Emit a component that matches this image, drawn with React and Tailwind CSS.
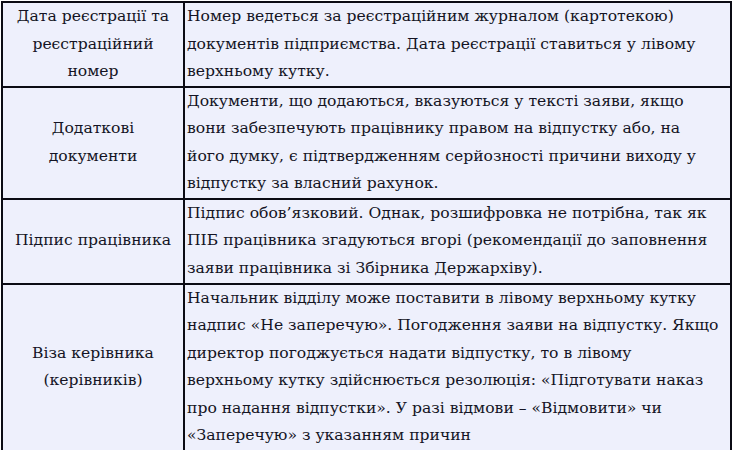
export default function App() {
  const rows = [
    {
      label: ['Дата реєстрації та', 'реєстраційний', 'номер'],
      text: [
        'Номер ведеться за реєстраційним журналом (картотекою)',
        'документів підприємства. Дата реєстрації ставиться у лівому',
        'верхньому кутку.',
      ],
      h: 'h-[84px]',
    },
    {
      label: ['Додаткові', 'документи'],
      text: [
        'Документи, що додаються, вказуються у тексті заяви, якщо',
        'вони забезпечують працівнику правом на відпустку або, на',
        'його думку, є підтвердженням серйозності причини виходу у',
        'відпустку за власний рахунок.',
      ],
      h: 'h-[111px]',
    },
    {
      label: ['Підпис працівника'],
      text: [
        'Підпис обов’язковий. Однак, розшифровка не потрібна, так як',
        'ПІБ працівника згадуються вгорі (рекомендації до заповнення',
        'заяви працівника зі Збірника Держархіву).',
      ],
      h: 'h-[85px]',
    },
    {
      label: ['Віза керівника', '(керівників)'],
      text: [
        'Начальник відділу може поставити в лівому верхньому кутку',
        'надпис «Не заперечую». Погодження заяви на відпустку. Якщо',
        'директор погоджується надати відпустку, то в лівому',
        'верхньому кутку здійснюється резолюція: «Підготувати наказ',
        'про надання відпустки». У разі відмови – «Відмовити» чи',
        '«Заперечую» з указанням причин',
      ],
      h: 'h-[165px]',
    },
  ]

  return (
    <div className="w-[734px] h-[450px] bg-white pt-[1px] pl-[1px]">
      <table className="table-fixed w-[731px] border-collapse bg-[#eef0fc] text-[#141424] text-[15.6px] leading-[27.5px] font-['DejaVu_Serif',serif]">
        <colgroup>
          <col className="w-[182px]" />
          <col />
        </colgroup>
        <tbody>
          {rows.map((r, i) => (
            <tr key={i} className={r.h}>
              <td className="border-2 border-[#0b0b14] text-center align-middle px-1">
                {r.label.map((l, j) => (
                  <div key={j} className="whitespace-nowrap">{l}</div>
                ))}
              </td>
              <td className="border-2 border-[#0b0b14] align-top pl-[2px] pr-1">
                {r.text.map((l, j) => (
                  <div key={j} className="whitespace-nowrap">{l}</div>
                ))}
              </td>
            </tr>
          ))}
        </tbody>
      </table>
    </div>
  )
}
